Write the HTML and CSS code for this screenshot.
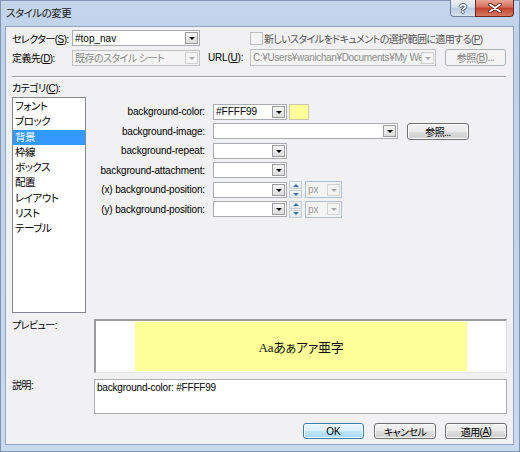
FILE: index.html
```html
<!DOCTYPE html>
<html lang="ja">
<head>
<meta charset="utf-8">
<title>スタイルの変更</title>
<link rel="stylesheet" href="styles.css">
</head>
<body>
<div class="window">
  <div class="titlebar">
    <span class="title">スタイルの変更</span>
    <div class="caption-btns">
      <div class="cap help">?</div>
      <div class="cap close">
        <svg width="14" height="10" viewBox="0 0 14 10"><path d="M2 1.5 L12 8.5 M12 1.5 L2 8.5" stroke="#5a1e18" stroke-width="3.6" stroke-linecap="round"/><path d="M2 1.5 L12 8.5 M12 1.5 L2 8.5" stroke="#ffffff" stroke-width="2" stroke-linecap="round"/></svg>
      </div>
    </div>
  </div>
  <div class="client">
    <div class="row row1">
      <span class="lbl w60">セレクター(<u>S</u>):</span>
      <div class="combo w128"><span class="val">#top_nav</span><span class="dd"></span></div>
      <span class="check"></span>
      <span class="checklbl">新しいスタイルをドキュメントの選択範囲に適用する(<u>P</u>)</span>
    </div>
    <div class="row row2">
      <span class="lbl w60">定義先(<u>D</u>):</span>
      <div class="combo disabled w128"><span class="val jpval">既存のスタイル シート</span><span class="dd"></span></div>
      <span class="lbl url">URL(<u>U</u>):</span>
      <div class="combo disabled w186 urlbox"><span class="val">C:¥Users¥wanichan¥Documents¥My Web</span><span class="dd"></span></div>
      <div class="btn disabled browse1">参照(<u>B</u>)...</div>
    </div>
    <div class="sep"></div>
    <div class="catlbl">カテゴリ(<u>C</u>):</div>
    <div class="main">
      <ul class="listbox">
        <li>フォント</li>
        <li>ブロック</li>
        <li class="sel">背景</li>
        <li>枠線</li>
        <li>ボックス</li>
        <li>配置</li>
        <li>レイアウト</li>
        <li>リスト</li>
        <li>テーブル</li>
      </ul>
      <div class="props">
        <span class="plbl">background-color:</span>
        <div class="ctl">
          <div class="combo w74"><span class="val">#FFFF99</span><span class="dd"></span></div>
          <span class="swatch"></span>
        </div>
        <span class="plbl">background-image:</span>
        <div class="ctl">
          <div class="combo w185"><span class="val"></span><span class="dd"></span></div>
          <div class="btn browse2">参照...</div>
        </div>
        <span class="plbl">background-repeat:</span>
        <div class="ctl">
          <div class="combo w74"><span class="val"></span><span class="dd"></span></div>
        </div>
        <span class="plbl">background-attachment:</span>
        <div class="ctl">
          <div class="combo w74"><span class="val"></span><span class="dd"></span></div>
        </div>
        <span class="plbl">(x) background-position:</span>
        <div class="ctl">
          <div class="combo w74"><span class="val"></span><span class="dd"></span></div>
          <div class="spin"><span class="up"></span><span class="down"></span></div>
          <div class="combo unit"><span class="val">px</span><span class="dd"></span></div>
        </div>
        <span class="plbl">(y) background-position:</span>
        <div class="ctl">
          <div class="combo w74"><span class="val"></span><span class="dd"></span></div>
          <div class="spin"><span class="up"></span><span class="down"></span></div>
          <div class="combo unit"><span class="val">px</span><span class="dd"></span></div>
        </div>
      </div>
    </div>
    <div class="brow preview-row">
      <span class="blbl">プレビュー:</span>
      <div class="preview"><div class="sample">Aaあぁアァ亜字</div></div>
    </div>
    <div class="brow desc-row">
      <span class="blbl">説明:</span>
      <div class="desc">background-color: #FFFF99</div>
    </div>
    <div class="buttons">
      <div class="btn default okbtn">OK</div>
      <div class="btn cancel">キャンセル</div>
      <div class="btn apply">適用(<u>A</u>)</div>
    </div>
  </div>
</div>
</body>
</html>
```
FILE: styles.css
```css
* { box-sizing: border-box; }
html, body { margin: 0; padding: 0; }
body {
  width: 520px;
  height: 452px;
  overflow: hidden;
  background: #ffffff;
  font-family: "Liberation Sans", "Noto Sans CJK JP", sans-serif;
  font-size: 10px;
  letter-spacing: -0.55px;
  color: #1a1a1a;
  font-feature-settings: "palt";
}
u { text-decoration: underline; text-underline-offset: 1px; }

.window {
  width: 520px;
  height: 452px;
  display: flex;
  flex-direction: column;
  background: linear-gradient(to bottom, #c4d6ec 0, #bed2ea 40px, #c3d6ec 60%, #c9daee 100%);
  box-shadow: inset 0 0 0 1px #7f95b3;
}

.titlebar {
  height: 27px;
  flex: none;
  display: flex;
  align-items: flex-start;
}
.title {
  padding-left: 6px;
  line-height: 26px;
  font-size: 10.5px;
  letter-spacing: -0.5px;
  color: #1b1b1b;
}
.caption-btns {
  margin-left: auto;
  margin-right: 6px;
  display: flex;
  height: 17px;
}
.cap {
  height: 17px;
  display: flex;
  align-items: center;
  justify-content: center;
}
.help {
  width: 25px;
  border: 1px solid #6f819b;
  border-top: none;
  border-right: none;
  border-radius: 0 0 0 4px;
  background: linear-gradient(to bottom, #e9eff7 0%, #d6e1ee 45%, #bccde2 50%, #d4e1f0 100%);
  color: #ffffff;
  font-weight: bold;
  font-size: 13px;
  letter-spacing: 0;
  font-family: "Liberation Sans", sans-serif;
  text-shadow: 1px 0 #4c5d77, -1px 0 #4c5d77, 0 1px #4c5d77, 0 -1px #4c5d77;
}
.close {
  width: 39px;
  border: 1px solid #6a2a22;
  border-top: none;
  border-radius: 0 0 4px 0;
  background: linear-gradient(to bottom, #e6a597 0%, #d66e5b 45%, #c4402c 50%, #d47a62 100%);
}

.client {
  flex: none;
  height: 417px;
  margin: 0 7px 0 6px;
  background: #f1f0f3;
  box-shadow: 0 0 0 1px #92a6c2;
  padding: 3px 6px 0 6px;
}

.row {
  display: flex;
  align-items: center;
}
.row1 { height: 16px; }
.row2 { height: 17px; margin-top: 3px; }
.lbl { white-space: nowrap; color: #000; }
.w60 { width: 60px; flex: none; }
.url { margin-left: 8px; width: 42px; flex: none; letter-spacing: -0.2px; }

.combo {
  flex: none;
  display: flex;
  align-items: center;
  height: 16px;
  background: #ffffff;
  border: 1px solid #a9acb2;
  padding-left: 2px;
  letter-spacing: 0;
}
.combo .val {
  flex: 1;
  min-width: 0;
  white-space: nowrap;
  overflow: hidden;
  color: #000;
}
.combo .jpval { letter-spacing: -0.55px; }
.dd {
  flex: none;
  width: 13px;
  height: 12px;
  margin-right: 1px;
  border: 1px solid #9c9c9c;
  background: linear-gradient(to bottom, #f7f7f7, #dcdcdc);
  display: flex;
  align-items: center;
  justify-content: center;
}
.dd::after {
  content: "";
  border-left: 3px solid transparent;
  border-right: 3px solid transparent;
  border-top: 3px solid #000;
  margin-top: 1px;
}
.combo.disabled {
  background: #f4f4f4;
  border-color: #c2c2c2;
}
.combo.disabled .val { color: #8c8c8c; }
.combo.disabled .dd {
  border-color: #d0d0d0;
  background: #f4f4f4;
}
.combo.disabled .dd::after { border-top-color: #a8a8a8; }
.urlbox .val { color: #6f6f6f; letter-spacing: -0.35px; }

.w128 { width: 128px; }
.w186 { width: 186px; height: 17px; }
.w74 { width: 74px; }
.w185 { width: 185px; }

.check {
  flex: none;
  width: 13px;
  height: 13px;
  margin-left: 50px;
  border: 1px solid #bdbdbd;
  background: #f4f4f4;
}
.checklbl {
  margin-left: 1px;
  white-space: nowrap;
  color: #555;
  letter-spacing: -0.6px;
}

.btn {
  flex: none;
  display: flex;
  align-items: center;
  justify-content: center;
  height: 16px;
  border: 1px solid #707070;
  border-radius: 3px;
  background: linear-gradient(to bottom, #f2f2f2 0%, #ebebeb 50%, #dddddd 50%, #cfcfcf 100%);
  box-shadow: inset 0 0 0 1px #fbfbfb;
  color: #000;
  white-space: nowrap;
}
.btn.disabled {
  border-color: #adb2b5;
  background: #f4f4f4;
  box-shadow: none;
  color: #838383;
}
.btn.default {
  border-color: #3c7fb1;
  background: linear-gradient(to bottom, #eaf6fd 0%, #d9f0fc 50%, #bee6fd 50%, #a7d9f5 100%);
  letter-spacing: 0;
}
.browse1 { margin-left: 9px; width: 61px; height: 17px; }
.browse2 { margin-left: 9px; width: 62px; height: 17px; }

.sep {
  margin-top: 10px;
  width: 494px;
  height: 2px;
  border-top: 1px solid #a0a0a0;
  border-bottom: 1px solid #ffffff;
}
.catlbl {
  margin-top: 4px;
  height: 15px;
  line-height: 13px;
  color: #000;
}

.main {
  display: flex;
  align-items: flex-start;
}
.listbox {
  flex: none;
  width: 74px;
  height: 216px;
  margin: 0;
  padding: 1px 0 0 0;
  list-style: none;
  background: #ffffff;
  border: 1px solid #828790;
}
.listbox li {
  height: 15.25px;
  line-height: 15px;
  padding-left: 2px;
  color: #000;
  font-size: 10.5px;
  letter-spacing: -0.5px;
}
.listbox li.sel {
  background: #3399ff;
  color: #ffffff;
}

.props {
  margin-top: 6px;
  display: grid;
  grid-template-columns: 119px auto;
  column-gap: 8px;
  row-gap: 2.5px;
  grid-auto-rows: 17px;
  align-items: center;
}
.plbl {
  text-align: right;
  white-space: nowrap;
  font-size: 10px;
  letter-spacing: -0.15px;
  color: #000;
}
.ctl {
  display: flex;
  align-items: center;
}
.swatch {
  margin-left: 2px;
  width: 20px;
  height: 16px;
  background: #ffff99;
  border: 1px solid #c9c9a8;
}
.spin {
  margin-left: 2px;
  width: 13px;
  height: 17px;
  display: flex;
  flex-direction: column;
  gap: 1px;
}
.spin span {
  flex: 1;
  border: 1px solid #c5cfdb;
  background: linear-gradient(to bottom, #f7f8fa, #e3e8ee);
  display: flex;
  align-items: center;
  justify-content: center;
}
.spin .up::after {
  content: "";
  border-left: 3px solid transparent;
  border-right: 3px solid transparent;
  border-bottom: 3px solid #3d6fb5;
}
.spin .down::after {
  content: "";
  border-left: 3px solid transparent;
  border-right: 3px solid transparent;
  border-top: 3px solid #3d6fb5;
}
.combo.unit {
  margin-left: 3px;
  width: 37px;
  height: 17px;
  background: #f4f4f4;
  border-color: #aebfd5;
}
.combo.unit .val { color: #9a9a9a; }
.combo.unit .dd {
  border-color: #d4d4d4;
  background: #f4f4f4;
}
.combo.unit .dd::after { border-top-color: #a8a8a8; }

.brow {
  display: grid;
  grid-template-columns: 82px 413px;
  align-items: start;
}
.blbl {
  padding-top: 1px;
  line-height: 12px;
  color: #000;
}
.preview-row { margin-top: 6px; }
.preview {
  height: 54px;
  background: #fdfefd;
  border-style: solid;
  border-width: 2px 1px 1px 2px;
  border-color: #9d9d9d #e4e4e4 #e4e4e4 #9d9d9d;
  padding: 1px 39px 1px 39px;
}
.sample {
  height: 100%;
  background: #ffff99;
  display: flex;
  align-items: center;
  justify-content: center;
  font-family: "Liberation Serif", "Noto Sans CJK JP", serif;
  font-size: 13px;
  letter-spacing: -0.3px;
  color: #111;
}
.desc-row { margin-top: 6px; }
.desc {
  height: 35px;
  background: #ffffff;
  border: 1px solid #b0b0b0;
  padding: 1px 2px;
  line-height: 13px;
  color: #000;
  letter-spacing: -0.2px;
}

.buttons {
  margin-top: 9px;
  display: flex;
  justify-content: flex-end;
}
.okbtn { width: 61px; }
.cancel { width: 62px; margin-left: 10px; }
.apply { width: 62px; margin-left: 9px; }
```
